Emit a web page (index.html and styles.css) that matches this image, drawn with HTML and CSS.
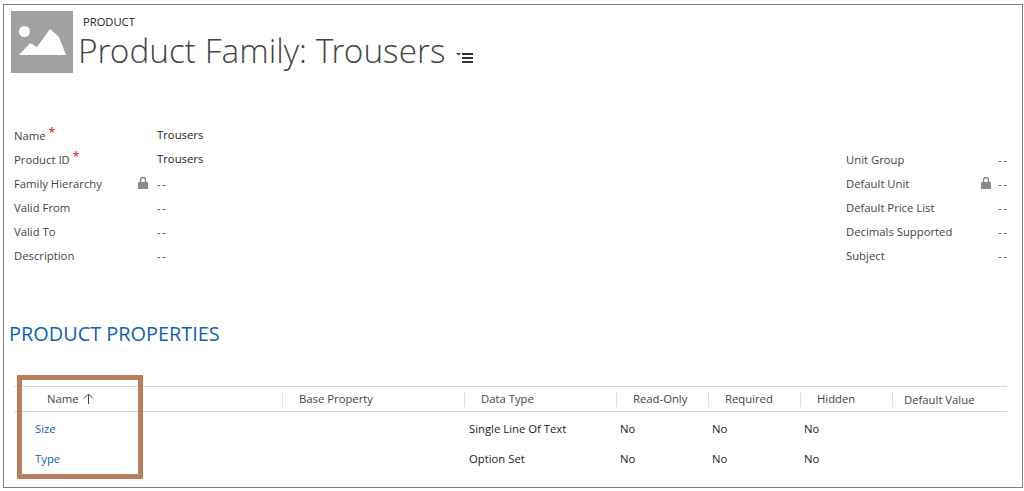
FILE: index.html
```html
<!DOCTYPE html>
<html lang="en">
<head>
<meta charset="utf-8">
<title>Product Family: Trousers</title>
<link rel="stylesheet" href="styles.css">
</head>
<body>
<main class="frame">
  <header class="head">
    <svg class="thumb" viewBox="0 0 62 62" aria-hidden="true">
      <rect width="62" height="62" fill="#a0a0a0"/>
      <circle cx="13.500" cy="20.500" r="5.500" fill="#fff"/>
      <path d="M8 44 L19 32 L26 36 L39 18 L48 26 L55 44 Z" fill="#fff"/>
    </svg>
    <div class="titles">
      <div class="entity">PRODUCT</div>
      <h1 class="title">Product Family: Trousers<svg class="menu" viewBox="0 0 17 10" aria-hidden="true">
          <path d="M0 0H5L2.500 2.500Z" fill="#444"/>
          <path d="M6 1H17M6 5H17M6 9H17" stroke="#333" stroke-width="2" fill="none"/>
        </svg></h1>
    </div>
  </header>

  <section class="form">
    <div class="col col-left">
      <div class="row"><span class="lbl">Name<sup class="req">*</sup></span><span class="lock"></span><span class="val dark">Trousers</span></div>
      <div class="row"><span class="lbl">Product ID<sup class="req">*</sup></span><span class="lock"></span><span class="val dark">Trousers</span></div>
      <div class="row"><span class="lbl">Family Hierarchy</span><span class="lock"><svg class="lockicon" viewBox="0 0 10 12"><path d="M2.500 5V3a2.500 2.500 0 0 1 5 0V5" fill="none" stroke="#8a8a8a" stroke-width="1.500"/><rect y="5" width="10" height="7" fill="#8a8a8a"/></svg></span><span class="val dash">--</span></div>
      <div class="row"><span class="lbl">Valid From</span><span class="lock"></span><span class="val dash">--</span></div>
      <div class="row"><span class="lbl">Valid To</span><span class="lock"></span><span class="val dash">--</span></div>
      <div class="row"><span class="lbl">Description</span><span class="lock"></span><span class="val dash">--</span></div>
    </div>
    <div class="col col-right">
      <div class="row"><span class="lbl">Unit Group</span><span class="lock"></span><span class="val dash">--</span></div>
      <div class="row"><span class="lbl">Default Unit</span><span class="lock"><svg class="lockicon" viewBox="0 0 10 12"><path d="M2.500 5V3a2.500 2.500 0 0 1 5 0V5" fill="none" stroke="#8a8a8a" stroke-width="1.500"/><rect y="5" width="10" height="7" fill="#8a8a8a"/></svg></span><span class="val dash">--</span></div>
      <div class="row"><span class="lbl">Default Price List</span><span class="lock"></span><span class="val dash">--</span></div>
      <div class="row"><span class="lbl">Decimals Supported</span><span class="lock"></span><span class="val dash">--</span></div>
      <div class="row"><span class="lbl">Subject</span><span class="lock"></span><span class="val dash">--</span></div>
    </div>
  </section>

  <h2 class="section">PRODUCT PROPERTIES</h2>

  <section class="grid">
    <div class="thead">
      <div class="th th-name">Name <svg class="arrow" viewBox="0 0 11 11"><path d="M5.500 11V1M1 5.500L5.500 1L10 5.500" fill="none" stroke="#444" stroke-width="1"/></svg></div>
      <div class="th">Base Property</div>
      <div class="th">Data Type</div>
      <div class="th">Read-Only</div>
      <div class="th">Required</div>
      <div class="th">Hidden</div>
      <div class="th th-last">Default Value</div>
    </div>
    <div class="tr">
      <div class="td td-name"><a class="link">Size</a></div><div class="td"></div><div class="td">Single Line Of Text</div><div class="td td-flag">No</div><div class="td td-flag">No</div><div class="td td-flag">No</div><div class="td"></div>
    </div>
    <div class="tr">
      <div class="td td-name"><a class="link">Type</a></div><div class="td"></div><div class="td">Option Set</div><div class="td td-flag">No</div><div class="td td-flag">No</div><div class="td td-flag">No</div><div class="td"></div>
    </div>
    <div class="callout"></div>
  </section>
</main>
</body>
</html>
```
FILE: styles.css
```css
* { box-sizing: border-box; }
html, body { margin: 0; padding: 0; background: #fff; }
body { width: 1024px; height: 491px; overflow: hidden; padding: 4px 1px 3px 3px; font-family: "Open Sans", "Noto Sans", sans-serif; font-size: 11.3px; color: #444; }
.frame { height: 484px; border: 1px solid #808080; padding: 6px 0 0 7px; }

.head { display: flex; height: 62px; gap: 5px; }
.thumb { width: 62px; height: 62px; flex: none; }
.titles { display: flex; flex-direction: column; }
.entity { margin: 3px 0 0 5px; font-size: 11.2px; line-height: 15px; color: #222; }
.title { margin: 5px 0 0; font-family: "Open Sans Light", "Open Sans", sans-serif; font-weight: 300; font-size: 33.400px; line-height: 32px; color: #444; white-space: nowrap; }
.menu { width: 17px; height: 10px; margin-left: 10px; }

.form { display: flex; justify-content: space-between; margin: 51px 13px 0 3px; height: 144px; }
.col-left { width: 200px; }
.col-right { width: 163px; padding-top: 24px; }
.row { display: flex; height: 24px; line-height: 24px; white-space: nowrap; align-items: center; }
.col-left .lbl { width: 124px; flex: none; }
.col-right .lbl { width: 135px; flex: none; }
.lock { width: 19px; display: flex; align-items: center; flex: none; }
.col-right .lock { width: 17px; }
.lockicon { width: 10px; height: 12px; margin-top: -3px; }
.val { flex: none; }
.dash { letter-spacing: 1.500px; }
.dark { color: #222; margin-top: -2px; }
.req { color: #e80000; font-size: 12px; line-height: 0; vertical-align: 3px; margin-left: 3px; }

.section { margin: 52px 0 0 -2px; height: 28px; font-weight: 400; font-size: 19.900px; line-height: 28px; color: #1160b7; white-space: nowrap; }

.grid { position: relative; margin: 38px 0 0 3px; width: 993px; }
.thead, .tr { display: grid; grid-template-columns: 268px 182px 152px 92px 92px 92px 115px; }
.thead { height: 26px; border-top: 1px solid #d6d6d6; border-bottom: 1px solid #d6d6d6; align-items: center; }
.th { height: 16px; line-height: 16px; padding-left: 16px; border-left: 1px solid #e0e0e0; white-space: nowrap; }
.th-name { padding-left: 33px; border-left: 0; }
.th-last { padding-left: 11px; line-height: 18px; }
.arrow { width: 11px; height: 11px; margin-left: 1px; vertical-align: -1px; }
.tr { height: 30px; line-height: 34px; color: #222; }
.td { padding-left: 5px; white-space: nowrap; }
.td-name { padding-left: 21px; }
.td-flag { padding-left: 4px; }
.link { color: #1160b7; }
.callout { position: absolute; left: 3px; top: -11px; width: 126px; height: 104px; border: 5px solid #b87d59; }
```
